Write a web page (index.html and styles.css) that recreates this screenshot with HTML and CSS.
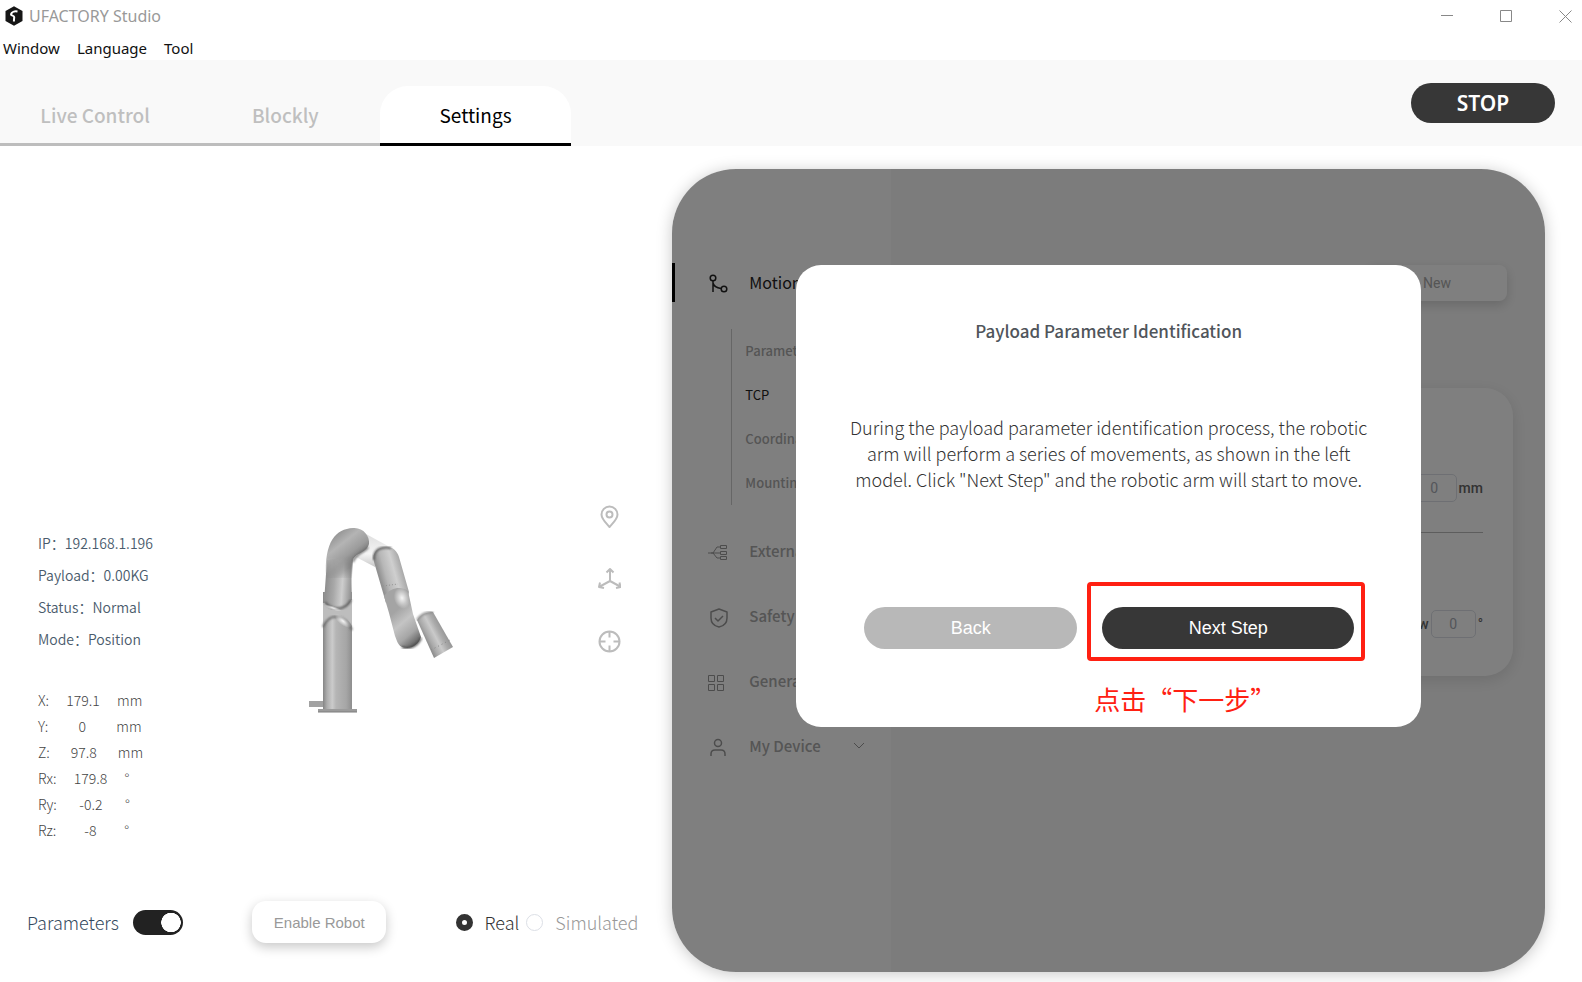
FILE: index.html
```html
<!DOCTYPE html>
<html lang="en">
<head>
<meta charset="utf-8">
<title>UFACTORY Studio</title>
<link rel="stylesheet" href="styles.css">
</head>
<body>
<header class="titlebar">
  <svg class="logo" viewBox="0 0 18 20"><path d="M9 0.300 17.500 5V15L9 19.700.5 15V5Z" fill="#161616"/><path d="M12.500 5.500C9.500 5 6.500 6 6 8.200 6 10 9 9.300 9.200 11L8.900 15.500" fill="none" stroke="#fff" stroke-width="2"/></svg>
  <span class="app-name">UFACTORY Studio</span>
  <div class="window-controls">
    <button aria-label="Minimize"><svg viewBox="0 0 13 13"><path d="M0 5.500h12"/></svg></button>
    <button aria-label="Maximize"><svg viewBox="0 0 13 13"><path d="M.5.500h11v11H.5z"/></svg></button>
    <button aria-label="Close"><svg viewBox="0 0 13 13"><path d="M.5.500l12 12M12.500.5l-12 12"/></svg></button>
  </div>
</header>
<nav class="menubar">
  <button>Window</button><button>Language</button><button>Tool</button>
</nav>
<div class="topbar">
  <nav class="tabs">
    <a href="#live" class="tab">Live Control</a>
    <a href="#blockly" class="tab">Blockly</a>
    <a href="#settings" class="tab tab-active">Settings</a>
  </nav>
  <button class="stop">STOP</button>
</div>
<main class="workspace">
  <section class="monitor">
    <div class="stage">
      <div class="telemetry">
        <ul class="status" lang="zh-CN">
          <li>IP：192.168.1.196</li>
          <li>Payload：0.00KG</li>
          <li>Status：Normal</li>
          <li>Mode：Position</li>
        </ul>
        <ul class="pose">
          <li><span>X:</span><span class="value">179.1</span><span>mm</span></li>
          <li><span>Y:</span><span class="value">0</span><span>mm</span></li>
          <li><span>Z:</span><span class="value">97.8</span><span>mm</span></li>
          <li><span>Rx:</span><span class="value">179.8</span><span>°</span></li>
          <li><span>Ry:</span><span class="value">-0.2</span><span>°</span></li>
          <li><span>Rz:</span><span class="value">-8</span><span>°</span></li>
        </ul>
      </div>
      <svg class="robot" viewBox="0 0 180 220" role="img" aria-label="Robot arm">
        <defs>
          <linearGradient id="base"><stop offset="0" stop-color="#858585"/><stop offset=".14" stop-color="#adadad"/><stop offset=".32" stop-color="#cbcbcb"/><stop offset=".45" stop-color="#b5b5b5"/><stop offset=".8" stop-color="#a6a6a6"/><stop offset="1" stop-color="#8e8e8e"/></linearGradient>
          <linearGradient id="upper" gradientUnits="userSpaceOnUse" x1="34" y1="76" x2="62" y2="78"><stop offset="0" stop-color="#8b8b8b"/><stop offset=".35" stop-color="#a8a8a8"/><stop offset=".65" stop-color="#cdcdcd"/><stop offset="1" stop-color="#8f8f8f"/></linearGradient>
          <linearGradient id="elbow" gradientUnits="userSpaceOnUse" x1="44" y1="24" x2="66" y2="52"><stop offset="0" stop-color="#929292"/><stop offset=".35" stop-color="#b4b4b4"/><stop offset=".7" stop-color="#9c9c9c"/><stop offset="1" stop-color="#707070"/></linearGradient>
          <linearGradient id="fade" x1="0" y1="0" x2="0" y2="1"><stop offset="0" stop-color="#fff"/><stop offset=".6" stop-color="#fff"/><stop offset="1" stop-color="#000"/></linearGradient>
          <mask id="elbow-mask" maskUnits="userSpaceOnUse" x="30" y="15" width="52" height="55"><rect x="30" y="15" width="52" height="55" fill="url(#fade)"/></mask>
          <linearGradient id="fore" gradientUnits="userSpaceOnUse" x1="90" y1="68" x2="115" y2="61"><stop offset="0" stop-color="#929292"/><stop offset=".25" stop-color="#b7b7b7"/><stop offset=".6" stop-color="#cfcfcf"/><stop offset="1" stop-color="#a0a0a0"/></linearGradient>
          <linearGradient id="wrist" gradientUnits="userSpaceOnUse" x1="101" y1="105" x2="126" y2="134"><stop offset="0" stop-color="#a4a4a4"/><stop offset=".35" stop-color="#c4c4c4"/><stop offset=".7" stop-color="#a6a6a6"/><stop offset="1" stop-color="#606060"/></linearGradient>
          <linearGradient id="tool" gradientUnits="userSpaceOnUse" x1="132" y1="126" x2="155" y2="114"><stop offset="0" stop-color="#858585"/><stop offset=".2" stop-color="#aaa"/><stop offset=".45" stop-color="#cacaca"/><stop offset=".65" stop-color="#ababab"/><stop offset="1" stop-color="#888"/></linearGradient>
          <linearGradient id="link" x1="0" y1="0" x2="0" y2="1"><stop offset="0" stop-color="#dedede"/><stop offset=".6" stop-color="#f5f5f5"/><stop offset="1" stop-color="#c8c8c8"/></linearGradient>
          <radialGradient id="shine"><stop offset="0" stop-color="#fff" stop-opacity=".9"/><stop offset="1" stop-color="#fff" stop-opacity="0"/></radialGradient>
          <filter id="soft"><feGaussianBlur stdDeviation="1"/></filter>
        </defs>
        <path d="M76 24 98 36 85 57 66 47Z" fill="url(#link)"/>
        <path d="M19 191h14v6H19z" fill="#a2a2a2"/>
        <path d="M33 82H62V200H33Z" fill="url(#base)"/>
        <path d="M28 199h39v3H28z" fill="#9b9b9b"/>
        <path d="M28 202h39" stroke="#7d7d7d"/>
        <path d="M33 93 62 90V116C55 103 40 103 33 116Z" fill="#bdbdbd"/>
        <path d="M33 117C39 103 54 103 62 120" fill="none" stroke="#6b6b6b" stroke-width="2" filter="url(#soft)"/>
        <ellipse cx="53" cy="111" rx="10" ry="4" transform="rotate(38 53 111)" fill="url(#shine)"/>
        <path d="M37 50 62 45C62 55 61 65 62 88 58 102 41 101 34 92Z" fill="url(#upper)"/>
        <path d="M35 92C42 101 55 101 61 90" fill="none" stroke="#5c5c5c" stroke-width="2" filter="url(#soft)"/>
        <ellipse cx="43" cy="98" rx="9" ry="2" transform="rotate(18 43 98)" fill="url(#shine)"/>
        <path d="M36 68C34 31 46 19 63 18 73 17 80 26 79 34 76 44 66 42 63 50L62 68Z" fill="url(#elbow)" mask="url(#elbow-mask)"/>
        <path d="M78 37C75 43 66 42 63 52" fill="none" stroke="#6c6c6c" stroke-width="2" filter="url(#soft)"/>
        <path d="M84 52C81 41 90 36 97 37 103 37 107 41 109 47L119 82 116 95 96 93Z" fill="url(#fore)"/>
        <path d="M84 50C83 39 92 36 101 38" fill="none" stroke="#5d5d5d" stroke-width="2" filter="url(#soft)"/>
        <path d="M94 86C101 77 112 76 118 81L123 104 131 127C128 136 120 140 112 137 108 135 107 131 105 126L99 103Z" fill="url(#wrist)"/>
        <ellipse cx="112" cy="88" rx="8" ry="11" transform="rotate(-15 112 88)" fill="url(#shine)"/>
        <path d="M112 137C120 140 128 135 131 128" fill="none" stroke="#4d4d4d" stroke-width="2" filter="url(#soft)"/>
        <path d="M93 76l15-2" stroke="#929292" stroke-dasharray="1 2"/>
        <path d="M127 110C131 104 137 102 143 102L163 137 144 148Z" fill="url(#tool)"/>
        <path d="M127 110C131 104 137 102 143 102" fill="none" stroke="#8d8d8d" stroke-width="2" filter="url(#soft)"/>
        <path d="M141 140l19-10" stroke="#888" stroke-dasharray="1 3"/>
      </svg>
      <div class="view-tools">
        <button aria-label="Position"><svg viewBox="0 0 24 24"><path d="M12.500 22C8.500 17.500 4.500 14 4.500 9.500a8 8 0 0 1 16 0C20.500 14 16.500 17.500 12.500 22Z"/><circle cx="12.500" cy="9.500" r="3"/></svg></button>
        <button aria-label="Coordinate axes"><svg viewBox="0 0 24 24"><path d="M13 2v12L2 20M13 14l11 6M9.500 5.500 13 2l3.500 3.500M3 15.500l-1 4.500 5 1M22.500 15.500l1 4.500-4.500 1"/></svg></button>
        <button aria-label="Center view"><svg viewBox="0 0 24 24"><circle cx="12.500" cy="12.500" r="10"/><path d="M12.500 2.500v6M12.500 16.500v6M2.500 12.500h6M16.500 12.500h6"/></svg></button>
      </div>
    </div>
    <div class="controls">
      <label class="params">Parameters<input type="checkbox" class="switch" checked></label>
      <button class="enable">Enable Robot</button>
      <div class="modes">
        <label class="mode"><input type="radio" name="mode" checked>Real</label>
        <label class="mode mode-off"><input type="radio" name="mode">Simulated</label>
      </div>
    </div>
  </section>
  <section class="panel">
    <nav class="sidebar">
      <a href="#motion" class="item item-active"><svg viewBox="0 0 20 20"><circle cx="5" cy="4" r="2.800"/><circle cx="16" cy="15" r="2.800"/><path d="M5 7v11M5 9C6 13 9 14 13 14.500"/></svg>Motion</a>
      <div class="subitems">
        <a href="#parameters">Parameters</a>
        <a href="#tcp" class="current">TCP</a>
        <a href="#coordinates">Coordinates</a>
        <a href="#mounting">Mounting</a>
      </div>
      <a href="#external" class="item"><svg class="thin" viewBox="0 0 20 20"><path d="M0 10h12M3 10h2l4-6h4M5 10l4 5h4M12.500 2.500h6v3h-6zM12.500 8.500h6v3h-6zM12.500 13.500h6v3h-6z"/></svg>External</a>
      <a href="#safety" class="item"><svg viewBox="0 0 20 20"><path d="M11 1 19 4V10C19 14.500 16 18 11 19 6 18 3 14.500 3 10V4ZM7 10l3 3 5-5"/></svg>Safety</a>
      <a href="#general" class="item"><svg class="thin" viewBox="0 0 20 20"><path d="M.5 2.500h6v6h-6zM9.500 2.500h6v6h-6zM.5 11.500h6v6h-6zM9.500 11.500h6v6h-6z"/></svg>General</a>
      <a href="#device" class="item"><svg viewBox="0 0 20 20"><circle cx="10" cy="5" r="3.500"/><path d="M3 18v-2C3 13 4 12 7 12h6c3 0 4 1 4 4v2"/></svg>My Device<svg class="chevron" viewBox="0 0 12 8"><path d="M1 1l5 5 5-5"/></svg></a>
    </nav>
    <div class="content">
      <button class="new">New</button>
      <div class="card">
        <label class="field"><input value="0"> mm</label>
        <hr>
        <label class="field"><span>w</span><input value="0"> °</label>
      </div>
    </div>
    <div class="overlay">
      <div class="dialog" role="dialog" aria-labelledby="dialog-title">
        <h2 id="dialog-title">Payload Parameter Identification</h2>
        <p>During the payload parameter identification process, the robotic arm will perform a series of movements, as shown in the left model. Click "Next Step" and the robotic arm will start to move.</p>
        <div class="actions">
          <button class="back">Back</button>
          <div class="next-wrap">
            <button class="next">Next Step</button>
            <span class="mark"></span>
            <span class="note" lang="zh-CN">点击“下一步”</span>
          </div>
        </div>
      </div>
    </div>
  </section>
</main>
</body>
</html>
```

FILE: styles.css
```css
* { box-sizing: border-box; }

body {
  margin: 0;
  min-height: 100vh;
  display: flex;
  flex-direction: column;
  background: #fff;
  font-family: "Noto Sans CJK SC", "Noto Sans", sans-serif;
}

button {
  border: 0;
  padding: 0;
  background: none;
  font: inherit;
  color: inherit;
  cursor: pointer;
}

a { color: inherit; text-decoration: none; }
ul { list-style: none; margin: 0; padding: 0; }
svg { display: block; fill: none; stroke-linejoin: round; }

/* Window chrome */
.titlebar {
  display: flex;
  align-items: center;
  height: 32px;
  padding: 0 10px 0 5px;
  font: 16px/32px "Noto Sans", sans-serif;
  color: #999;
}
.logo { width: 18px; height: 20px; margin-right: 6px; }
.window-controls { display: flex; gap: 46px; margin-left: auto; }
.window-controls svg { width: 13px; height: 13px; stroke: #888; }

.menubar {
  display: flex;
  gap: 17px;
  height: 28px;
  padding: 0 3px;
  font: 15px/32px "Noto Sans", sans-serif;
  color: #111;
}
.menubar button { height: 32px; }

/* Tabs */
.topbar {
  display: flex;
  justify-content: space-between;
  align-items: flex-end;
  height: 86px;
  padding-right: 27px;
  background: #f9f9f9;
}
.tabs { display: flex; width: 36.7%; min-width: 480px; }
.tab {
  flex: 1;
  display: flex;
  flex-direction: column;
  height: 60px;
  font-size: 19px;
  font-weight: 500;
  line-height: 57px;
  text-align: center;
  color: #bfbfbf;
}
.tab::after { content: ""; border-bottom: 3px solid #bdbdbd; }
.tab-active {
  border-radius: 28px 28px 0 0;
  background: #fff;
  color: #000;
  font-weight: 400;
}
.tab-active::after { border-color: #000; }
.stop {
  width: 144px;
  height: 40px;
  margin-bottom: 23px;
  border-radius: 20px;
  background: #373737;
  color: #fff;
  font: 600 21px/40px "Noto Sans", sans-serif;
}

.workspace { flex: 1; display: flex; }

/* Robot monitor */
.monitor {
  flex: 0 0 42.5%;
  display: flex;
  flex-direction: column;
  font-weight: 300;
}
.stage { flex: 1; display: flex; align-items: flex-end; padding: 0 51px 0 38px; }
.telemetry { width: 252px; font-size: 14px; }
.status { margin-bottom: 32px; line-height: 32px; font-weight: 350; color: #4a5b6c; }
.pose { line-height: 26px; color: #444; }
.pose li { display: flex; }
.pose .value { width: 68px; text-align: center; }
.robot { width: 180px; height: 220px; margin-bottom: 113px; }
.view-tools {
  display: flex;
  flex-direction: column;
  gap: 38px;
  margin: 0 0 190px auto;
}
.view-tools svg { width: 24px; height: 24px; stroke: #bcbcbc; stroke-width: 2; }

.controls {
  display: flex;
  align-items: center;
  justify-content: space-between;
  padding: 58px 34px 39px 27px;
  font-size: 18px;
}
.params { display: flex; align-items: center; gap: 14px; color: #34495e; }
.switch {
  appearance: none;
  width: 50px;
  height: 25px;
  margin: 0;
  border-radius: 13px;
  background: radial-gradient(circle 10px at 38px 50%, #fff 95%, #222 100%);
}
.enable {
  width: 134px;
  height: 42px;
  border-radius: 14px;
  background: #fff;
  box-shadow: 0 4px 12px rgba(0, 0, 0, .22);
  font: 15px "Liberation Sans", Arial, sans-serif;
  color: #999;
}
.modes { display: flex; gap: 7px; }
.mode { display: flex; align-items: center; gap: 12px; color: #333; }
.mode-off { color: #999; }
.mode input {
  appearance: none;
  width: 17px;
  height: 17px;
  margin: 0;
  border: 1px solid #dcdfe6;
  border-radius: 50%;
}
.mode input:checked { border: 6px solid #333; }

/* Settings panel */
.panel {
  position: relative;
  flex: 1;
  display: flex;
  margin: 23px 37px 10px 0;
  border-radius: 64px;
  overflow: hidden;
  background: #f9f9f9;
  box-shadow: 0 2px 16px rgba(0, 0, 0, .22);
}
.sidebar {
  flex: 0 0 219px;
  padding-top: 94px;
  background: #fff;
  font-size: 15px;
  font-weight: 500;
  color: #aaa;
}
.item {
  display: flex;
  align-items: center;
  height: 39px;
  margin-bottom: 26px;
  padding: 0 22px 2px 36px;
}
.item svg {
  width: 20px;
  height: 20px;
  margin: 4px 21px 0 0;
  stroke: #999;
  stroke-width: 1.5;
}
.item .thin { stroke-width: 1; }
.item .chevron { width: 12px; height: 8px; margin: 0 4px 0 auto; stroke-width: 1; }
.item-active { border-left: 3px solid #000; padding-left: 33px; color: #222; font-weight: 400; font-size: 16px; }
.item-active svg { stroke: #222; }
.subitems {
  display: flex;
  flex-direction: column;
  margin: 27px 0 27px 59px;
  padding-left: 13px;
  border-left: 1px solid #ccc;
  font-size: 13px;
  line-height: 44px;
}
.current { color: #222; font-weight: 400; }
.content {
  flex: 1;
  display: flex;
  flex-direction: column;
  align-items: flex-end;
  padding: 96px 32px 0;
}
.new {
  width: 140px;
  height: 36px;
  margin-right: 6px;
  border-radius: 8px;
  background: #fff;
  box-shadow: 0 4px 12px rgba(0, 0, 0, .16);
  font: 14px Roboto, sans-serif;
  color: #aaa;
}
.card {
  width: 100%;
  margin-top: 87px;
  padding: 86px 30px 38px;
  border-radius: 28px;
  background: #fff;
  box-shadow: 0 4px 16px rgba(0, 0, 0, .12);
}
.card hr { margin: 30px 0 77px; border: 0; border-top: 1px solid #bbb; }
.field {
  display: flex;
  justify-content: flex-end;
  align-items: center;
  gap: 2px;
  font: 500 14px Roboto, sans-serif;
  color: #666;
}
.field input {
  width: 45px;
  height: 28px;
  padding: 0;
  border: 1px solid #dcdfe6;
  border-radius: 5px;
  background: #fff;
  font: 14px Roboto, sans-serif;
  text-align: center;
  color: #a8abb4;
}

/* Dialog */
.overlay {
  position: absolute;
  inset: 0;
  padding-top: 96px;
  background: rgba(0, 0, 0, .5);
}
.dialog {
  width: 625px;
  margin: 0 auto;
  padding: 52px 50px 78px;
  border-radius: 25px;
  background: #fff;
  text-align: center;
}
.dialog h2 {
  margin: 0;
  font-size: 17px;
  font-weight: 500;
  line-height: 28px;
  color: #50555b;
}
.dialog p {
  margin: 69px 0 115px;
  font-size: 18px;
  font-weight: 300;
  line-height: 26px;
  color: #333;
}
.actions {
  display: flex;
  gap: 25px;
  margin: 0 17px 0 18px;
  font: 18px "Liberation Sans", Arial, sans-serif;
  color: #fff;
}
.actions button { height: 42px; border-radius: 21px; }
.back { width: 213px; background: #b8b8b8; }
.next-wrap { position: relative; flex: 1; }
.next { width: 100%; background: #373737; }
.mark {
  position: absolute;
  inset: -25px -11px -12px -15px;
  border: 4px solid #ff2012;
  border-radius: 4px;
  pointer-events: none;
}
.note {
  position: absolute;
  top: 72px;
  left: -8px;
  font: 26px/40px "Noto Sans CJK SC", sans-serif;
  color: #ff2012;
  white-space: nowrap;
}
```
